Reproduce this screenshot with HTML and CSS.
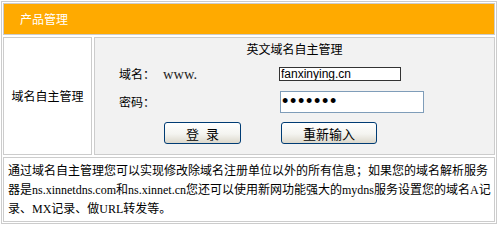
FILE: index.html
```html
<!DOCTYPE html>
<html lang="zh-CN">
<head>
<meta charset="utf-8">
<title>产品管理</title>
<link rel="stylesheet" href="styles.css">
</head>
<body>
<div class="panel">
  <div class="head">产品管理</div>
  <div class="side">域名自主管理</div>
  <div class="main">
    <div class="title">英文域名自主管理</div>
    <div class="row r1"><span class="lab">域名：</span><span class="www">www.</span><input class="domain" type="text" value="fanxinying.cn"></div>
    <div class="row r2"><span class="lab">密码：</span><span class="www"></span><input class="pwd" type="password" value="1234567"></div>
    <div class="btns"><button class="btn b1" type="button">登&nbsp;&nbsp;录</button><button class="btn b2" type="button">重新输入</button></div>
  </div>
  <div class="note">通过域名自主管理您可以实现修改除域名注册单位以外的所有信息；如果您的域名解析服务器是ns.xinnetdns.com和ns.xinnet.cn您还可以使用新网功能强大的mydns服务设置您的域名A记录、MX记录、做URL转发等。</div>
</div>
</body>
</html>
```

FILE: styles.css
```css
body {
  margin: 0;
  padding: 1px;
  font-family: "Liberation Serif", "Noto Sans CJK SC", serif;
  font-size: 12px;
  color: #000;
  background: #fff;
}

.panel {
  width: 496px;
  box-sizing: border-box;
  border: 1px solid #ccc;
  padding: 1px;
  display: grid;
  grid-template-columns: 89px 401px;
  grid-template-rows: 32px 118px 65px;
  gap: 2px;
}

.head {
  grid-column: 1 / 3;
  background: #ffaa00;
  border: 1px solid #ccc;
  color: #fff;
  padding-left: 16px;
  display: flex;
  align-items: center;
}

.side {
  border: 1px solid #ccc;
  background: #fff;
  display: flex;
  align-items: center;
  justify-content: center;
}

.main {
  border: 1px solid #ccc;
  background: #f2f2f2;
  padding-top: 5px;
}

.title {
  text-align: center;
  height: 14px;
  line-height: 14px;
}

.row {
  display: flex;
  align-items: center;
  padding-left: 24px;
}

.r1 { height: 33px; }
.r2 { height: 23px; }

.lab { width: 44px; flex: none; }
.www {
  width: 116px;
  flex: none;
  font-size: 14.5px;
  color: #222;
  line-height: 16px;
  padding-top: 1px;
}

.domain {
  width: 122px;
  height: 14px;
  box-sizing: border-box;
  border: 1px solid #333;
  padding: 0 1px;
  margin: 0;
  font: 12px "Liberation Sans", sans-serif;
  color: #000;
  background: #fff;
  outline: none;
}

.pwd {
  width: 144px;
  height: 22px;
  box-sizing: border-box;
  border: 1px solid #7f9db9;
  padding: 0 1px;
  margin: 0 0 0 1px;
  font: 18px "Liberation Sans", sans-serif;
  letter-spacing: 1.7px;
  color: #000;
  background: #fff;
  outline: none;
}

.btns {
  display: flex;
  gap: 40px;
  padding-left: 69px;
  margin-top: 9px;
}

.btn {
  height: 22px;
  border: 1px solid #003c74;
  border-radius: 3px;
  background: linear-gradient(#ffffff, #f4f4f0 55%, #dcd8cc);
  font: 13px "Liberation Sans", "Noto Sans CJK SC", sans-serif;
  color: #000;
  padding: 0;
  margin: 0;
}

.b1 { width: 77px; }
.b2 { width: 96px; }

.note {
  grid-column: 1 / 3;
  border: 1px solid #ccc;
  background: #fff;
  padding: 4px 2px 0 4px;
  line-height: 19px;
}
```
